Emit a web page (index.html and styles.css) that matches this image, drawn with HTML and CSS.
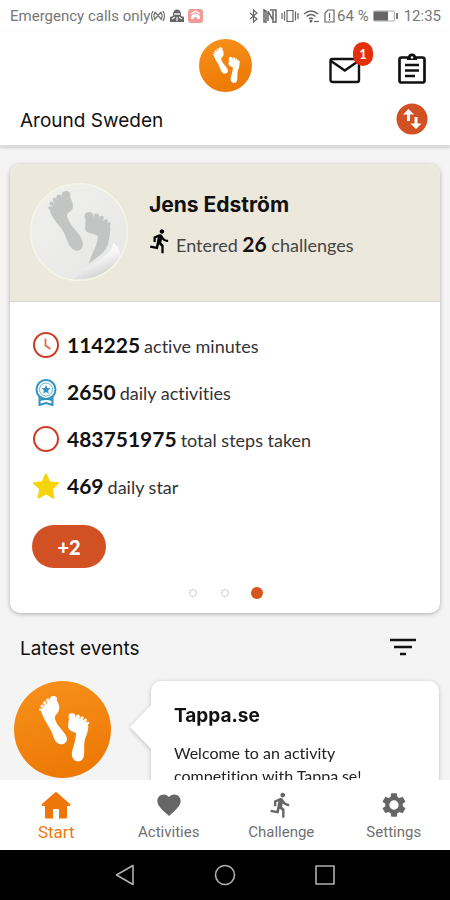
FILE: index.html
```html
<!DOCTYPE html>
<html lang="en">
<head>
<meta charset="utf-8">
<meta name="viewport" content="width=device-width, initial-scale=1">
<title>Tappa.se</title>
<link rel="stylesheet" href="styles.css">
</head>
<body>
<svg class="defs" aria-hidden="true">
  <defs>
    <linearGradient id="orange" x1="0" y1="0" x2="0.3" y2="1"><stop offset="0" stop-color="#f7921c"/><stop offset="1" stop-color="#ee7a06"/></linearGradient>
    <linearGradient id="paper" x1="0" y1="0" x2="1" y2="1"><stop offset="0" stop-color="#f0f0ec"/><stop offset="1" stop-color="#e6e7e6"/></linearGradient>
    <linearGradient id="curl" x1="0.4" y1="0.2" x2="0.75" y2="0.85"><stop offset="0" stop-color="#ffffff"/><stop offset="0.4" stop-color="#f4f4f4"/><stop offset="1" stop-color="#cfcfcf"/></linearGradient>
    <symbol id="logo" viewBox="0 0 97 97">
      <circle cx="48.500" cy="48.500" r="48.500" fill="url(#orange)"/>
      <g fill="#fff">
        <path d="M27 29C31 23 35 20 39 18C44 18 46 25 45 29C44 33 40 34 41 38C43 46 53 52 53 58C53 62 49 64 46 63C41 62 40 57 38 52C35 44 28 37 27 29Z"/>
        <ellipse cx="39.500" cy="18" rx="3.500" ry="3"/><circle cx="34" cy="19.500" r="1.900"/><circle cx="30.500" cy="22" r="1.700"/><circle cx="28" cy="25" r="1.500"/><circle cx="26.500" cy="28.500" r="1.300"/>
        <path d="M55 37C60 35 71 38 74 43C75 48 73 53 71 58C69 65 72 75 68 79C64 82 59 80 58 75C57 69 62 62 62 52C59 51 54 49 54 45Z"/>
        <ellipse cx="58" cy="35.500" rx="3.500" ry="3.200"/><circle cx="64" cy="35.500" r="1.900"/><circle cx="68" cy="37" r="1.700"/><circle cx="71.500" cy="39" r="1.500"/><circle cx="74" cy="42" r="1.300"/>
      </g>
    </symbol>
    <symbol id="runner" viewBox="0 0 24 24"><path d="M13.490 5.480c1.100 0 2-.9 2-2s-.9-2-2-2-2 .9-2 2 .9 2 2 2zm-3.600 13.900l1-4.400 2.100 2v6h2v-7.500l-2.100-2 .6-3c1.300 1.500 3.300 2.500 5.500 2.500v-2c-1.900 0-3.500-1-4.300-2.400l-1-1.600c-.4-.6-1-1-1.700-1-.3 0-.5.1-.8.1l-5.200 2.200v4.700h2v-3.400l1.800-.7-1.600 8.100-4.900-1-.4 2 7 1.400z"/></symbol>
  </defs>
</svg>

<div class="status">
  <span>Emergency calls only</span>
  <svg class="status-left" viewBox="0 0 54 16" aria-hidden="true">
    <g fill="none" stroke="#777" stroke-width="1.300"><path d="M3 3Q0 8 3 13M5 4L11 11M11 4L5 11M5 4Q3 8 5 12M11 4Q13 8 11 12M13 3Q16 8 13 13"/></g>
    <path d="M23 6a4 4.500 0 0 1 8 0v2l3 1v5H20V9l3-1z" fill="#666"/><path d="M24 6h6M22 11l3-2M32 11l-3-2M27 9v4" stroke="#eee" stroke-width="1.300"/>
    <rect x="38" y="1" width="15" height="14" rx="3" fill="#f19a97"/><path d="M41 10a4.500 4.500 0 0 1 9 0v1h-2.500a2 2 0 0 0-4 0H41z" fill="#fff"/><path d="M41 6l4.500-3L50 6" fill="none" stroke="#fff" stroke-width="1.200"/>
  </svg>
  <svg class="status-right" viewBox="0 0 89 16" aria-hidden="true">
    <g fill="none" stroke="#666" stroke-width="1.200">
      <path d="M2 5l7 6-3.500 3V2L9 5l-7 6"/>
      <path d="M16 14V2l2 1v11zM20 3l5 9V3M20 13V4M22 2h6v12h-4" stroke-width="1.500"/>
      <path d="M34 5v6M36.500 3.500v9M39 2.500h6v11h-6zM47.500 3.500v9M50 5v6"/>
      <path d="M56 6q7-6 14 0M58.500 8.500q4.500-4 9 0M61 11q2-2 4 0" stroke-width="1.500"/><path d="M66 13.500h5"/>
      <path d="M77 5l3-3h6v12h-9zM81.500 5v5M81.500 11v1.500"/>
    </g><circle cx="63" cy="13" r="1.500" fill="#666"/>
  </svg>
  <span>64 %</span>
  <svg class="battery" viewBox="0 0 26 12" aria-hidden="true"><rect x=".5" y="1" width="21" height="10" rx="1" fill="#fff" stroke="#aaa"/><rect x="1" y="1.500" width="14" height="9" fill="#666"/><path d="M24 3v6" stroke="#777" stroke-width="2"/></svg>
  <time>12:35</time>
</div>

<header class="top">
  <div class="top-row">
    <svg class="brand" role="img" aria-label="Tappa"><use href="#logo"/></svg>
    <div class="actions">
      <button class="icon-button" aria-label="Messages">
        <svg viewBox="0 0 32 32"><rect x="1.500" y="6" width="28.500" height="23" rx="2" fill="none" stroke="#111" stroke-width="2.400"/><path d="M2 8l13.800 9.500L29.500 8" fill="none" stroke="#111" stroke-width="2.400"/></svg>
        <span class="badge">1</span>
      </button>
      <button class="icon-button" aria-label="Assignments">
        <svg viewBox="0 0 32 32"><path d="M12 4.500a4 4 0 0 1 8 0" fill="#111"/><rect x="3.500" y="4.500" width="25" height="25" rx="2" fill="none" stroke="#111" stroke-width="2.700"/><path d="M11 4h10v3H11z" fill="#111"/><circle cx="16" cy="4.500" r="1.200" fill="#fff"/><path d="M9 12h14M9 17.500h14M9 23h10" stroke="#111" stroke-width="2.400"/></svg>
      </button>
    </div>
  </div>
  <div class="challenge-row">
    <h1 class="heading">Around Sweden</h1>
    <button class="swap" aria-label="Switch challenge"><svg viewBox="0 0 32 32"><circle cx="16" cy="16" r="15.500" fill="#d15124"/><path d="M12.500 6L18 11.500h-4V18h-3v-6.500H7zM20 26l-5.500-5.500h4V14h3v6.500h4z" fill="#fff"/></svg></button>
  </div>
</header>

<main class="content">
  <section class="card">
    <div class="profile">
      <svg class="avatar" viewBox="0 0 98 98" role="img" aria-label="Profile picture">
        <circle cx="49" cy="49" r="48" fill="url(#paper)"/>
        <g fill="#c3c4c4">
          <path d="M20 26C25 17 31 14 36 11C41 13 43 20 43 24C42 29 37 29 37 33C39 43 53 52 53 61C53 67 48 69 44 67C38 64 37 55 33 48C28 40 20 34 20 26Z"/>
          <ellipse cx="36" cy="12" rx="4.500" ry="4"/><circle cx="29" cy="14" r="2.600"/><circle cx="25" cy="17" r="2.300"/><circle cx="21.500" cy="20.500" r="2"/><circle cx="20" cy="25" r="1.800"/>
          <path d="M56 35C64 32 76 37 80 43C81 49 79 55 78 61C76 70 65 75 59 81C60 73 67 65 68 53C64 50 54 51 55 44Z"/>
          <ellipse cx="59" cy="33.500" rx="4.500" ry="4.500"/><circle cx="66.500" cy="33" r="2.600"/><circle cx="71.500" cy="35" r="2.300"/><circle cx="76" cy="38" r="2.100"/><circle cx="79" cy="41" r="1.800"/>
        </g>
        <path d="M43 96.500C53 84 70 79 78 70C82 66 83 63 83 60C87 62 89 65 91 71Q79 97 43 96.500Z" fill="url(#curl)"/>
        <circle cx="49" cy="49" r="48.300" fill="none" stroke="#f7f5ea" stroke-width="1.400"/>
      </svg>
      <div class="who">
        <h2 class="name">Jens Edström</h2>
        <p class="entered"><svg class="run" viewBox="2 0 24 24" aria-hidden="true"><use href="#runner" width="24" height="24"/></svg><span>Entered <b>26</b> challenges</span></p>
      </div>
    </div>
    <div class="summary">
      <ul class="stats">
        <li><svg viewBox="0 0 28 28"><circle cx="14" cy="14" r="12" fill="#fff" stroke="#cf3c24" stroke-width="2"/><path d="M13.500 7.500v7l5 3.500" fill="none" stroke="#d86b50" stroke-width="1.800"/></svg><b>114225</b><span>active minutes</span></li>
        <li><svg viewBox="0 0 28 28"><g fill="none" stroke="#2e93bd" stroke-width="2"><circle cx="14" cy="11.500" r="9.500"/><circle cx="14" cy="11.500" r="6.500" stroke-width=".7"/><path d="M7.500 18.500V27l6.500-2 6.500 2v-8.500M8 22q6-2 12 0"/></g><path d="M14 7l1.300 3 3.200.3-2.400 2.200.7 3.200-2.800-1.700-2.800 1.700.7-3.200-2.400-2.200 3.200-.3z" fill="#2e93bd"/></svg><b>2650</b><span>daily activities</span></li>
        <li><svg viewBox="0 0 28 28"><circle cx="14" cy="14" r="12" fill="#fff" stroke="#cf3c24" stroke-width="2"/></svg><b>483751975</b><span>total steps taken</span></li>
        <li><svg viewBox="0 0 28 28"><path d="M14 2l3.700 8 8.800 1-6.500 6 1.800 9L14 21.500 6.200 26 8 17 1.500 11l8.800-1z" fill="#f5d50a" stroke="#f5d50a" stroke-width="1.500" stroke-linejoin="round"/></svg><b>469</b><span>daily star</span></li>
      </ul>
      <button class="more">+2</button>
      <div class="dots"><i></i><i></i><i class="on"></i></div>
    </div>
  </section>

  <div class="events-head">
    <h2 class="heading">Latest events</h2>
    <button class="filter" aria-label="Filter events"><svg viewBox="0 0 26 20"><path d="M0 3h26M4 10h18M10 17h6" stroke="#111" stroke-width="2.400"/></svg></button>
  </div>

  <article class="event">
    <svg class="event-logo" role="img" aria-label="Tappa"><use href="#logo"/></svg>
    <div class="bubble">
      <h3>Tappa.se</h3>
      <p>Welcome to an activity<br>competition with Tappa.se!</p>
    </div>
  </article>
</main>

<nav class="tabs">
  <a class="tab active" href="#start"><svg viewBox="0 0 30 28"><path d="M14 1.500q1-1 2 0L29 13q1 2-1 2h-2v11q0 1.500-1.500 1.500H18V18h-6v9.500H5.500Q4 27.500 4 26V15H2q-2 0-1-2z"/></svg>Start</a>
  <a class="tab" href="#activities"><svg viewBox="0 0 24 24"><path d="M12 21.350l-1.450-1.320C5.400 15.360 2 12.280 2 8.500 2 5.420 4.420 3 7.500 3c1.740 0 3.410.81 4.500 2.090C13.090 3.810 14.760 3 16.500 3 19.580 3 22 5.420 22 8.500c0 3.780-3.400 6.860-8.550 11.540L12 21.350z"/></svg>Activities</a>
  <a class="tab" href="#challenge"><svg><use href="#runner"/></svg>Challenge</a>
  <a class="tab" href="#settings"><svg viewBox="0 0 24 24"><path fill-rule="evenodd" d="M19.430 12.980c.04-.32.07-.64.07-.98s-.03-.66-.07-.98l2.110-1.650c.19-.15.24-.42.12-.64l-2-3.460c-.12-.22-.39-.3-.61-.22l-2.490 1c-.52-.4-1.080-.73-1.690-.98l-.38-2.650C14.460 2.180 14.250 2 14 2h-4c-.25 0-.46.18-.49.42l-.38 2.650c-.61.25-1.170.59-1.690.98l-2.490-1c-.23-.09-.49 0-.61.22l-2 3.460c-.13.22-.07.49.12.64l2.110 1.650c-.04.32-.07.65-.07.98s.03.66.07.98l-2.110 1.650c-.19.15-.24.42-.12.64l2 3.460c.12.22.39.3.61.22l2.490-1c.52.4 1.080.73 1.690.98l.38 2.650c.03.24.24.42.49.42h4c.25 0 .46-.18.49-.42l.38-2.650c.61-.25 1.170-.59 1.690-.98l2.490 1c.23.09.49 0 .61-.22l2-3.460c.12-.22.07-.49-.12-.64l-2.110-1.650zM12 16a4 4 0 1 1 0-8 4 4 0 0 1 0 8z"/></svg>Settings</a>
</nav>

<div class="system">
  <button aria-label="Back"><svg viewBox="0 0 24 24"><path d="M20 2.500v19L3.500 12z"/></svg></button>
  <button aria-label="Home"><svg viewBox="0 0 24 24"><circle cx="12" cy="12" r="9.500"/></svg></button>
  <button aria-label="Recent apps"><svg viewBox="0 0 24 24"><rect x="3" y="3" width="18" height="18"/></svg></button>
</div>
</body>
</html>
```
FILE: styles.css
```css
* { box-sizing: border-box; }
body {
  margin: 0;
  height: 100vh;
  display: flex;
  flex-direction: column;
  overflow: hidden;
  background: #f4f4f4;
  color: #111;
  font-family: Lato, "Liberation Sans", sans-serif;
  font-variant-ligatures: none;
}
h1, h2, h3, p, ul { margin: 0; padding: 0; }
h1, h2, h3 { font-family: Inter, Lato, sans-serif; }
button { border: 0; padding: 0; background: none; font: inherit; color: inherit; }
svg { display: block; flex: none; }
.defs { position: absolute; width: 0; height: 0; }

.status {
  display: flex;
  align-items: center;
  height: 32px;
  padding: 0 9px 0 10px;
  background: #fff;
  color: #777;
  font: 15px Roboto, sans-serif;
}
.status-left { width: 54px; height: 16px; }
.status-right { width: 89px; height: 16px; margin-left: auto; }
.battery { width: 26px; height: 12px; margin: 0 5px 0 4px; }

.top {
  position: relative;
  background: #fff;
  border-bottom: 2px solid #ddd;
  box-shadow: 0 1px 2px #ccc;
}
.top-row {
  display: grid;
  grid-template-columns: 1fr auto 1fr;
  align-items: center;
  height: 67px;
  padding: 0 22px;
}
.brand { grid-column: 2; width: 53px; height: 53px; }
.actions { display: flex; justify-content: flex-end; gap: 35px; padding-top: 6px; }
.icon-button { position: relative; }
.icon-button svg { width: 32px; height: 32px; }
.badge {
  position: absolute;
  top: -11px;
  right: -12px;
  width: 20px;
  height: 24px;
  border-radius: 10px;
  background: #e32f0c;
  color: #fff;
  font-size: 13px;
  font-weight: 700;
  line-height: 24px;
}
.challenge-row {
  display: flex;
  align-items: center;
  justify-content: space-between;
  height: 46px;
  padding: 0 22px 6px 20px;
}
.heading { padding-top: 4px; font-size: 19px; font-weight: 400; line-height: 24px; }
.swap svg { width: 32px; height: 32px; }

.content { flex: 1; min-height: 0; overflow: hidden; padding: 17px 10px 0; }
.card {
  border-radius: 10px;
  background: #fff;
  box-shadow: 0 1px 4px #aaa;
  overflow: hidden;
}
.profile {
  display: flex;
  gap: 21px;
  padding: 19px 20px 20px;
  background: #ede8dc;
  border-bottom: 1px solid #d8d7cf;
}
.avatar { width: 98px; height: 98px; }
.who { padding-top: 8px; }
.name { font-size: 21px; line-height: 28px; }
.entered { display: flex; align-items: center; margin-top: 8px; font-size: 18px; line-height: 28px; color: #444; }
.entered b { font-size: 21px; color: #111; }
.run { width: 27px; height: 28px; margin-bottom: 6px; }
.summary { padding: 20px 22px 14px; }
.stats { list-style: none; }
.stats li {
  display: flex;
  align-items: baseline;
  height: 47px;
  padding-top: 9px;
  color: #333;
  font-size: 18px;
  line-height: 28px;
}
.stats svg { width: 28px; height: 28px; margin-right: 7px; align-self: flex-start; }
.stats b { margin-right: 4px; font-size: 21px; color: #111; }
.more {
  display: block;
  width: 74px;
  height: 43px;
  margin-top: 15px;
  border-radius: 22px;
  background: #d15124;
  color: #fff;
  font-size: 20px;
  font-weight: 900;
}
.dots { display: flex; justify-content: center; align-items: center; gap: 24px; height: 12px; margin-top: 19px; }
.dots i { width: 8px; height: 8px; border: 1px solid #ccc; border-radius: 50%; }
.dots .on { width: 12px; height: 12px; margin: 0 -2px; border: 0; background: #d9531c; }

.events-head { display: flex; align-items: center; justify-content: space-between; height: 68px; padding: 0 24px 0 10px; }
.filter svg { width: 26px; height: 20px; }
.event { display: flex; align-items: flex-start; gap: 40px; padding: 0 1px 0 4px; }
.event-logo { width: 97px; height: 97px; }
.bubble {
  position: relative;
  flex: 1;
  padding: 22px 23px 40px;
  border-radius: 10px;
  background: #fff;
  filter: drop-shadow(0 1px 2px #bbb);
}
.bubble::before {
  content: "";
  position: absolute;
  left: -21px;
  top: 23px;
  width: 22px;
  height: 46px;
  background: #fff;
  clip-path: polygon(100% 0, 0 50%, 100% 100%);
}
.bubble h3 { font-size: 19px; line-height: 26px; }
.bubble p { margin-top: 12px; font-size: 16px; line-height: 23px; color: #222; }

.tabs {
  position: relative;
  display: grid;
  grid-template-columns: repeat(4, 1fr);
  height: 70px;
  background: #fff;
}
.tab {
  display: flex;
  flex-direction: column;
  align-items: center;
  justify-content: flex-end;
  gap: 3px;
  padding-bottom: 8px;
  color: #707070;
  font: 15px/20px Roboto, sans-serif;
  text-decoration: none;
}
.tab svg { width: 28px; height: 28px; fill: #666; }
.tab.active { color: #ed7b10; font-size: 17px; }
.tab.active svg { width: 30px; fill: #ee7609; }

.system {
  display: flex;
  justify-content: center;
  align-items: center;
  gap: 76px;
  height: 50px;
  background: #000;
}
.system svg { width: 24px; height: 24px; fill: none; stroke: #b0b0b0; stroke-width: 1.6; stroke-linejoin: round; }
```
